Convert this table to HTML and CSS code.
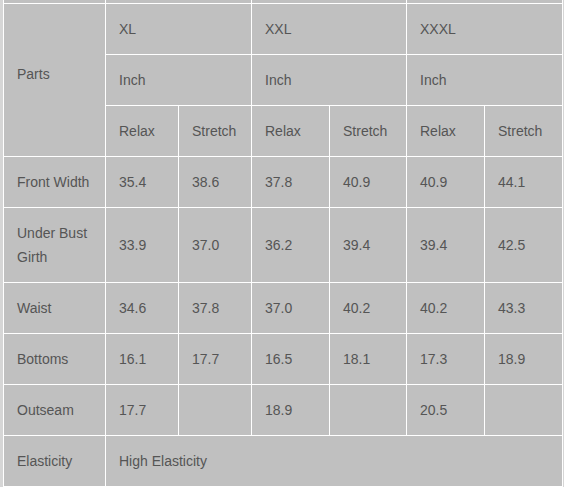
FILE: index.html
```html
<!DOCTYPE html>
<html>
<head>
<meta charset="utf-8">
<link rel="stylesheet" href="styles.css">
</head>
<body>
<div class="wrap">
<table class="size">
<colgroup>
<col class="c0"><col class="c1"><col class="c2"><col class="c3"><col class="c4"><col class="c5"><col class="c6">
</colgroup>
<tr class="r-top"><td></td><td colspan="2"></td><td colspan="2"></td><td colspan="2"></td></tr>
<tr class="r"><td rowspan="3" class="parts">Parts</td><td colspan="2">XL</td><td colspan="2">XXL</td><td colspan="2">XXXL</td></tr>
<tr class="r"><td colspan="2">Inch</td><td colspan="2">Inch</td><td colspan="2">Inch</td></tr>
<tr class="r"><td>Relax</td><td>Stretch</td><td>Relax</td><td>Stretch</td><td>Relax</td><td>Stretch</td></tr>
<tr class="r"><td>Front Width</td><td>35.4</td><td>38.6</td><td>37.8</td><td>40.9</td><td>40.9</td><td>44.1</td></tr>
<tr class="r-tall"><td>Under Bust<br>Girth</td><td>33.9</td><td>37.0</td><td>36.2</td><td>39.4</td><td>39.4</td><td>42.5</td></tr>
<tr class="r"><td>Waist</td><td>34.6</td><td>37.8</td><td>37.0</td><td>40.2</td><td>40.2</td><td>43.3</td></tr>
<tr class="r"><td>Bottoms</td><td>16.1</td><td>17.7</td><td>16.5</td><td>18.1</td><td>17.3</td><td>18.9</td></tr>
<tr class="r"><td>Outseam</td><td>17.7</td><td></td><td>18.9</td><td></td><td>20.5</td><td></td></tr>
<tr class="r"><td>Elasticity</td><td colspan="6">High Elasticity</td></tr>
</table>
</div>
</body>
</html>
```
FILE: styles.css
```css
html, body {
  margin: 0;
  padding: 0;
  background: #ffffff;
}
.wrap {
  padding-left: 3px;
  height: 489px;
  overflow: hidden;
  background: linear-gradient(#d6d6d6, #d6d6d6) no-repeat;
  background-size: 100% 487px;
}
.size {
  border-collapse: collapse;
  table-layout: fixed;
  width: 560px;
  margin-top: -8px;
  background: #c0c0c0;
  font-family: Arial, "Liberation Sans", sans-serif;
  font-size: 14px;
  color: #555555;
}
.size td {
  border: 1px solid #ffffff;
  padding: 0 0 0 13px;
  vertical-align: middle;
  line-height: 24px;
  text-align: left;
}
.size td.parts {
  padding-bottom: 12px;
}
.c0 { width: 102px; }
.c1 { width: 73px; }
.c2 { width: 73px; }
.c3 { width: 78px; }
.c4 { width: 77px; }
.c5 { width: 78px; }
.c6 { width: 78px; }
.r-top td { height: 10px; padding: 0; }
.r td { height: 50px; }
.r-tall td { height: 74px; }
```
